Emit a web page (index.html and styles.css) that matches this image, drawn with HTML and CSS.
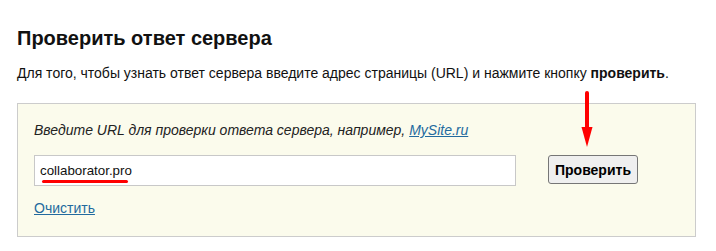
FILE: index.html
```html
<!DOCTYPE html>
<html lang="ru">
<head>
<meta charset="utf-8">
<link rel="stylesheet" href="styles.css">
</head>
<body>
<div class="page">
  <h1 class="title">Проверить ответ сервера</h1>
  <p class="lead">Для того, чтобы узнать ответ сервера введите адрес страницы (URL) и нажмите кнопку <b>проверить</b>.</p>
  <div class="box">
    <p class="hint">Введите URL для проверки ответа сервера, например, <a href="#" class="link">MySite.ru</a></p>
    <div class="row">
      <div class="field">
        <span class="value">collaborator.pro</span>
        <span class="mark"></span>
      </div>
      <div class="btn-wrap">
        <button class="btn">Проверить</button>
        <svg class="arrow" width="14" height="58" viewBox="0 0 14 58">
          <path d="M7 2 V38" stroke="#ff0000" stroke-width="4" stroke-linecap="round"/>
          <path d="M1.5 36 L12.5 36 L7 56 Z" fill="#ff0000"/>
        </svg>
      </div>
    </div>
    <a href="#" class="link clear">Очистить</a>
  </div>
</div>
</body>
</html>
```
FILE: styles.css
```css
html, body {
  margin: 0;
  padding: 0;
  background: #ffffff;
}
.page {
  padding: 26px 20px 0 17px;
  font-family: "Liberation Sans", Arial, sans-serif;
  color: #111;
}
.title {
  margin: 0;
  font-size: 20px;
  line-height: 24px;
  font-weight: bold;
  color: #111;
}
.lead {
  margin: 15px 0 0;
  font-size: 14px;
  line-height: 17px;
}
.lead b {
  color: #111;
}
.box {
  margin-top: 21px;
  width: 645px;
  border: 1px solid #cccccc;
  background: #fbfbec;
  padding: 18px 16px 19px 16px;
}
.hint {
  margin: 0;
  font-size: 14px;
  line-height: 17px;
  font-style: italic;
  color: #222;
}
.link {
  color: #236a9e;
  text-decoration: underline;
}
.row {
  display: flex;
  align-items: flex-start;
  margin-top: 16px;
  gap: 32px;
}
.field {
  position: relative;
  box-sizing: border-box;
  width: 482px;
  height: 31px;
  background: #fff;
  border: 1px solid #c8c8c8;
  padding: 6px 5px;
  font-size: 13.333px;
  line-height: 17px;
  color: #111;
}
.mark {
  position: absolute;
  left: 7px;
  top: 24px;
  width: 86px;
  height: 3px;
  border-radius: 2px;
  background: #ff0000;
}
.btn-wrap {
  position: relative;
}
.btn {
  box-sizing: border-box;
  width: 90px;
  height: 29px;
  font-family: "Liberation Sans", Arial, sans-serif;
  font-size: 14px;
  font-weight: bold;
  color: #000;
  background: #efefef;
  border: 1px solid #767676;
  border-radius: 3px;
  padding: 0;
}
.arrow {
  position: absolute;
  left: 32px;
  top: -64px;
}
.clear {
  display: inline-block;
  margin-top: 14px;
  font-size: 14px;
  line-height: 17px;
}
```
